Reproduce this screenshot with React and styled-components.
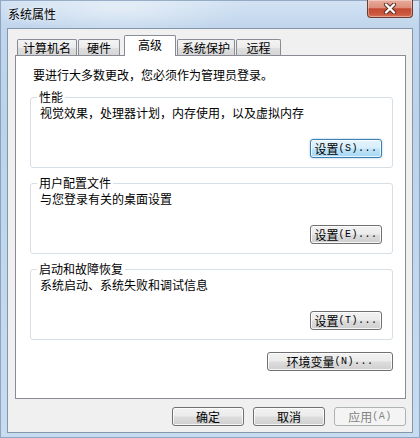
import React from 'react';
import styled, { createGlobalStyle, css } from 'styled-components';

const GlobalStyle = createGlobalStyle`
  html, body {
    margin: 0;
    padding: 0;
    background: #fff;
  }
  body {
    font-family: "Noto Sans CJK SC", "Liberation Sans", sans-serif;
    font-size: 12px;
    color: #000;
    overflow: hidden;
  }
`;

const Frame = styled.div`
  width: 420px;
  height: 438px;
  box-sizing: border-box;
  padding: 0 7px 5px;
  display: flex;
  flex-direction: column;
  background:
    radial-gradient(ellipse 180px 40px at 120px 8px, rgba(255,255,255,0.45), rgba(255,255,255,0) 70%),
    linear-gradient(180deg, #d3e3f3 0%, #c1d6ec 26px, #bcd3ea 120px, #c8dcf0 100%);
  box-shadow: inset 0 0 0 1px rgba(70, 100, 140, 0.45);
`;

const TitleBar = styled.div`
  height: 28px;
  display: flex;
  align-items: flex-start;
  justify-content: space-between;
  flex-shrink: 0;
`;

const Title = styled.div`
  margin: 7px 0 0 1px;
  line-height: 14px;
  color: #000;
  text-shadow: 0 0 6px rgba(255, 255, 255, 0.9);
`;

const CloseButton = styled.div`
  width: 46px;
  height: 18px;
  box-sizing: border-box;
  border: 1px solid #6f3b30;
  border-top: none;
  border-radius: 0 0 4px 4px;
  background: linear-gradient(180deg, #e9ab9c 0%, #dc8f7c 45%, #c44a32 52%, #cb5a40 85%, #d87a5e 100%);
  box-shadow: inset 0 0 0 1px rgba(255, 255, 255, 0.35);
  display: flex;
  align-items: center;
  justify-content: center;
`;

const Client = styled.div`
  flex: 1;
  box-sizing: border-box;
  background: #f0f0f0;
  border: 1px solid #8396ab;
  padding: 6px 6px 6px 7px;
  display: flex;
  flex-direction: column;
`;

const TabStrip = styled.div`
  display: flex;
  align-items: flex-end;
  height: 21px;
  margin: 0 0 -1px 2px;
  position: relative;
  z-index: 1;
`;

const Tab = styled.div`
  box-sizing: border-box;
  width: ${p => p.$w}px;
  margin-left: ${p => p.$gap}px;
  height: 16px;
  margin-bottom: 1px;
  border: 1px solid #898c95;
  border-bottom: none;
  border-radius: 2px 2px 0 0;
  background: linear-gradient(180deg, #f4f4f4 0%, #ebebeb 50%, #dedede 55%, #d6d6d6 100%);
  display: flex;
  align-items: center;
  justify-content: center;
  line-height: 14px;

  ${p => p.$active && css`
    height: 21px;
    margin-bottom: 0;
    padding-bottom: 3px;
    background: #fff;
  `}
`;

const Panel = styled.div`
  height: 344px;
  box-sizing: border-box;
  background: #fff;
  border: 1px solid #898c95;
  padding: 12px 12px 0 14px;
  display: flex;
  flex-direction: column;
`;

const Intro = styled.div`
  line-height: 14px;
  margin: 0 0 8px 3px;
`;

const Group = styled.fieldset`
  margin: 0 0 8px;
  padding: 0 10px 9px 9px;
  border: 1px solid #d5dfe5;
  border-radius: 3px;
  display: flex;
  flex-direction: column;
  min-width: 0;
`;

const Legend = styled.legend`
  padding: 0 2px;
  margin-left: -3px;
  line-height: 14px;
`;

const Desc = styled.div`
  margin-top: 2px;
  line-height: 14px;
`;

const ButtonRow = styled.div`
  display: flex;
  justify-content: flex-end;
  gap: ${p => p.$gap || 0}px;
  margin-top: ${p => p.$top}px;
`;

const Button = styled.button`
  box-sizing: border-box;
  width: ${p => p.$w}px;
  height: 19px;
  padding: 0;
  margin: 0;
  font: inherit;
  font-size: 12px;
  line-height: 14px;
  color: #000;
  border: 1px solid #707070;
  border-radius: 3px;
  background: linear-gradient(180deg, #f2f2f2 0%, #ebebeb 48%, #dddddd 52%, #cfcfcf 100%);
  box-shadow: inset 0 0 0 1px rgba(255, 255, 255, 0.8);
  display: flex;
  align-items: center;
  justify-content: center;

  ${p => p.$focus && css`
    border-color: #3c7fb1;
    background: linear-gradient(180deg, #e5f4fc 0%, #d6eefb 48%, #bfe4f8 52%, #a9d8f3 100%);
    box-shadow: inset 0 0 0 1px rgba(255, 255, 255, 0.7), 0 0 2px rgba(60, 127, 177, 0.6);
  `}

  ${p => p.disabled && css`
    border-color: #adb2b5;
    background: #f4f4f4;
    color: #838383;
    box-shadow: none;
  `}
`;

const Key = styled.span`
  font-family: "Liberation Mono", monospace;
  font-size: 10px;
  letter-spacing: 0.5px;
`;

function SysButton({ label, hotkey, w = 72, focus, disabled }) {
  return (
    <Button $w={w} $focus={focus} disabled={disabled}>
      {label}
      {hotkey && <Key>({hotkey}){w < 100 || hotkey !== 'A' ? '...' : ''}</Key>}
    </Button>
  );
}

function CloseGlyph() {
  return (
    <svg width="14" height="11" viewBox="0 0 14 11">
      <path d="M3 1.5 L11 9.5 M11 1.5 L3 9.5" stroke="#5b2a20" strokeWidth="4.2" strokeLinecap="round" />
      <path d="M3 1.5 L11 9.5 M11 1.5 L3 9.5" stroke="#fff" strokeWidth="2.4" strokeLinecap="round" />
    </svg>
  );
}

const tabs = [
  { label: '计算机名', w: 60, gap: 0 },
  { label: '硬件', w: 42, gap: 1 },
  { label: '高级', w: 52, gap: 4, active: true },
  { label: '系统保护', w: 58, gap: 1 },
  { label: '远程', w: 45, gap: 1 },
];

const groups = [
  { title: '性能', desc: '视觉效果，处理器计划，内存使用，以及虚拟内存', key: 'S', focus: true },
  { title: '用户配置文件', desc: '与您登录有关的桌面设置', key: 'E' },
  { title: '启动和故障恢复', desc: '系统启动、系统失败和调试信息', key: 'T' },
];

export default function App() {
  return (
    <>
      <GlobalStyle />
      <Frame>
        <TitleBar>
          <Title>系统属性</Title>
          <CloseButton><CloseGlyph /></CloseButton>
        </TitleBar>
        <Client>
          <TabStrip>
            {tabs.map(t => (
              <Tab key={t.label} $w={t.w} $gap={t.gap} $active={t.active}>{t.label}</Tab>
            ))}
          </TabStrip>
          <Panel>
            <Intro>要进行大多数更改，您必须作为管理员登录。</Intro>
            {groups.map(g => (
              <Group key={g.title}>
                <Legend>{g.title}</Legend>
                <Desc>{g.desc}</Desc>
                <ButtonRow $top={19}>
                  <SysButton label="设置" hotkey={g.key} focus={g.focus} />
                </ButtonRow>
              </Group>
            ))}
            <ButtonRow $top={4}>
              <SysButton label="环境变量" hotkey="N" w={126} />
            </ButtonRow>
          </Panel>
          <ButtonRow $top={8} $gap={9}>
            <SysButton label="确定" />
            <SysButton label="取消" />
            <Button $w={72} disabled>应用<Key>(A)</Key></Button>
          </ButtonRow>
        </Client>
      </Frame>
    </>
  );
}
